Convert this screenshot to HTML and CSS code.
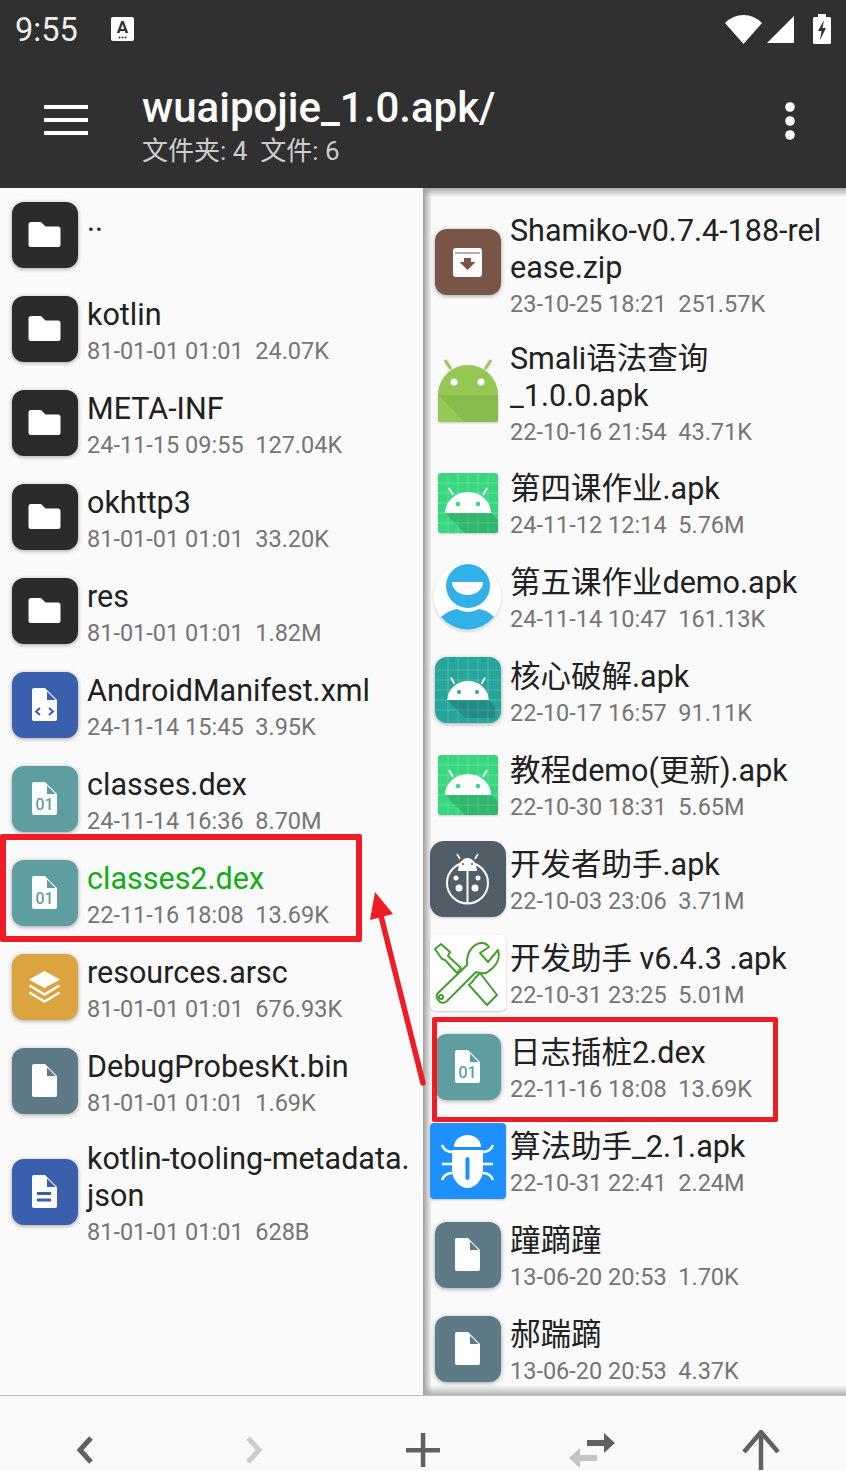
FILE: index.html
```html
<!DOCTYPE html>
<html lang="zh-CN">
<head>
  <meta charset="UTF-8">
  <meta name="viewport" content="width=device-width, initial-scale=1.0">
  <title>wuaipojie_1.0.apk</title>
  <link rel="stylesheet" href="styles.css">
</head>
<body>

  <!-- icon sprite -->
  <svg class="sprite" xmlns="http://www.w3.org/2000/svg">
    <symbol id="folder" viewBox="0 0 66 66">
      <rect width="66" height="66" rx="12" fill="#2b2b2b"/>
      <path d="M19 20h10l4.500 4.500h12.500a2.500 2.500 0 0 1 2.500 2.500v15.500a2.500 2.500 0 0 1-2.500 2.500h-27a2.500 2.500 0 0 1-2.500-2.500v-20a2.500 2.500 0 0 1 2.500-2.500z" fill="#fff"/>
    </symbol>
    <symbol id="doc" viewBox="0 0 66 66">
      <rect width="66" height="66" rx="12" fill="currentColor"/>
      <path d="M22 16h11l12 12v19a2 2 0 0 1-2 2h-21a2 2 0 0 1-2-2v-29a2 2 0 0 1 2-2z" fill="#fff"/>
      <path d="M35 19.500v8.500h8.500z" fill="currentColor"/>
    </symbol>
    <symbol id="layers" viewBox="0 0 66 66">
      <rect width="66" height="66" rx="12" fill="currentColor"/>
      <path d="M32.500 17l15.500 8.500-15.500 8.500-15.500-8.500z" fill="#fff"/>
      <path d="M17.500 31.500l15 9 15-9M17.500 38.500l15 9 15-9" fill="none" stroke="#fff" stroke-width="2.500"/>
    </symbol>
    <symbol id="zip" viewBox="0 0 66 66">
      <rect width="66" height="66" rx="12" fill="currentColor"/>
      <rect x="18" y="19" width="29" height="29" rx="3" fill="#fff"/>
      <path d="M20 24h25" stroke="currentColor"/>
      <path d="M29 29h7v4h4.500l-8 8-8-8h4.500z" fill="currentColor"/>
    </symbol>
    <symbol id="droid" viewBox="0 0 66 66">
      <path d="M10 44h46l7 7v13h-33z" fill="#000" fill-opacity=".14"/>
      <path d="M10 44a23 21 0 0 1 46 0z" fill="#fff"/>
      <path d="M18 26l-4-7M48 26l4-7" stroke="#fff" stroke-width="1.800"/>
      <circle cx="23" cy="35" r="2.200" fill="currentColor"/>
      <circle cx="43" cy="35" r="2.200" fill="currentColor"/>
    </symbol>
  </svg>

  <header class="app-header">
    <div class="status-bar">
      <div class="status-left">
        <span class="clock">9:55</span>
        <svg class="kbd-icon" viewBox="0 0 23 24">
          <rect width="23" height="24" rx="2" fill="#fff"/>
          <text x="11.500" y="16" text-anchor="middle" class="kbd-letter">A</text>
          <circle cx="8.500" cy="20.500" r="1" fill="#303030"/>
          <circle cx="11.500" cy="20.500" r="1" fill="#303030"/>
          <circle cx="14.500" cy="20.500" r="1" fill="#303030"/>
        </svg>
      </div>
      <div class="status-right">
        <svg class="wifi" viewBox="0 0 37 29"><path d="M18.500 29L0 8Q8 0 18.500 0T37 8z" fill="#fff"/></svg>
        <svg class="signal" viewBox="0 0 27 27"><path d="M27 0v27h-27z" fill="#fff"/></svg>
        <svg class="battery" viewBox="0 0 18 30">
          <path d="M5 0h8v3h3.500a1.500 1.500 0 0 1 1.500 1.500v24a1.500 1.500 0 0 1-1.500 1.500h-15a1.500 1.500 0 0 1-1.500-1.500v-24a1.500 1.500 0 0 1 1.500-1.500h3.500z" fill="#fff"/>
          <path d="M11 6l-6 11h3.500l-1.500 9 6-12h-3.500z" fill="#303030"/>
        </svg>
      </div>
    </div>
    <div class="toolbar">
      <svg class="menu-icon" viewBox="0 0 44 30"><path d="M0 0h44v4h-44zM0 13h44v4h-44zM0 26h44v4h-44z" fill="#fff"/></svg>
      <div class="toolbar-text">
        <div class="path-title">wuaipojie_1.0.apk/</div>
        <div class="path-sub">文件夹: 4&nbsp; 文件: 6</div>
      </div>
      <svg class="more-icon" viewBox="0 0 10 38">
        <circle cx="5" cy="5" r="4.800" fill="#fff"/>
        <circle cx="5" cy="19" r="4.800" fill="#fff"/>
        <circle cx="5" cy="33" r="4.800" fill="#fff"/>
      </svg>
    </div>
  </header>

  <main class="panes">
    <ul class="pane pane-left">
      <li class="row">
        <svg class="icon"><use href="#folder"/></svg>
        <div class="info"><div class="name">..</div><div class="meta">&nbsp;</div></div>
      </li>
      <li class="row">
        <svg class="icon"><use href="#folder"/></svg>
        <div class="info"><div class="name">kotlin</div><div class="meta">81-01-01 01:01&nbsp; 24.07K</div></div>
      </li>
      <li class="row">
        <svg class="icon"><use href="#folder"/></svg>
        <div class="info"><div class="name">META-INF</div><div class="meta">24-11-15 09:55&nbsp; 127.04K</div></div>
      </li>
      <li class="row">
        <svg class="icon"><use href="#folder"/></svg>
        <div class="info"><div class="name">okhttp3</div><div class="meta">81-01-01 01:01&nbsp; 33.20K</div></div>
      </li>
      <li class="row">
        <svg class="icon"><use href="#folder"/></svg>
        <div class="info"><div class="name">res</div><div class="meta">81-01-01 01:01&nbsp; 1.82M</div></div>
      </li>
      <li class="row">
        <svg class="icon c-blue" viewBox="0 0 66 66">
          <use href="#doc"/>
          <path d="M28 36l-4 3.500 4 3.500M37 36l4 3.500-4 3.500" fill="none" stroke="#3a5fad" stroke-width="2"/>
        </svg>
        <div class="info"><div class="name">AndroidManifest.xml</div><div class="meta">24-11-14 15:45&nbsp; 3.95K</div></div>
      </li>
      <li class="row">
        <svg class="icon c-teal" viewBox="0 0 66 66">
          <use href="#doc"/>
          <text x="32.500" y="44" text-anchor="middle" class="bin-text">01</text>
        </svg>
        <div class="info"><div class="name">classes.dex</div><div class="meta">24-11-14 16:36&nbsp; 8.70M</div></div>
      </li>
      <li class="row">
        <svg class="icon c-teal" viewBox="0 0 66 66">
          <use href="#doc"/>
          <text x="32.500" y="44" text-anchor="middle" class="bin-text">01</text>
        </svg>
        <div class="info"><div class="name name-open">classes2.dex</div><div class="meta">22-11-16 18:08&nbsp; 13.69K</div></div>
      </li>
      <li class="row">
        <svg class="icon c-amber"><use href="#layers"/></svg>
        <div class="info"><div class="name">resources.arsc</div><div class="meta">81-01-01 01:01&nbsp; 676.93K</div></div>
      </li>
      <li class="row">
        <svg class="icon c-slate"><use href="#doc"/></svg>
        <div class="info"><div class="name">DebugProbesKt.bin</div><div class="meta">81-01-01 01:01&nbsp; 1.69K</div></div>
      </li>
      <li class="row row-tall">
        <svg class="icon c-blue" viewBox="0 0 66 66">
          <use href="#doc"/>
          <path d="M25 33h14v3h-14zM25 39.500h14v3h-14z" fill="#3a5fad"/>
        </svg>
        <div class="info"><div class="name">kotlin-tooling-metadata.<br>json</div><div class="meta">81-01-01 01:01&nbsp; 628B</div></div>
      </li>
    </ul>

    <ul class="pane pane-right">
      <li class="row row-tall">
        <svg class="icon icon-up c-brown"><use href="#zip"/></svg>
        <div class="info"><div class="name">Shamiko-v0.7.4-188-rel<br>ease.zip</div><div class="meta">23-10-25 18:21&nbsp; 251.57K</div></div>
      </li>
      <li class="row row-tall">
        <svg class="icon flat" viewBox="0 0 66 66">
          <path d="M10 2l6 9M56 2l-6 9" stroke="#95c755" stroke-width="2.500"/>
          <path d="M3 37a30 30 0 0 1 60 0v25a2 2 0 0 1-2 2h-56a2 2 0 0 1-2-2z" fill="#95c755"/>
          <path d="M3 37h60v27h-33z" fill="#7fae48" fill-opacity=".55"/>
          <circle cx="19" cy="24" r="3.500" fill="#fff"/>
          <circle cx="46" cy="24" r="3.500" fill="#fff"/>
        </svg>
        <div class="info"><div class="name">Smali语法查询<br>_1.0.0.apk</div><div class="meta">22-10-16 21:54&nbsp; 43.71K</div></div>
      </li>
      <li class="row">
        <svg class="icon flat c-green" viewBox="0 0 66 66">
          <rect x="3" y="4" width="60" height="60" rx="3" fill="#37d67f"/>
          <path d="M13 4v60M23 4v60M33 4v60M43 4v60M53 4v60M3 14h60M3 24h60M3 34h60M3 44h60M3 54h60" stroke="#fff" stroke-opacity=".22"/>
          <use href="#droid"/>
        </svg>
        <div class="info"><div class="name">第四课作业.apk</div><div class="meta">24-11-12 12:14&nbsp; 5.76M</div></div>
      </li>
      <li class="row">
        <svg class="icon icon-round flat" viewBox="0 0 69 69">
          <circle cx="34.500" cy="34.500" r="34" fill="#fff"/>
          <circle cx="35" cy="24" r="22" fill="#33b0e8"/>
          <path d="M19 20h31a15.500 13 0 0 1-31 0z" fill="#fff"/>
          <path d="M8 55Q16 48 24 47Q35 53 46 47Q54 48 61 55A34 34 0 0 1 8 55z" fill="#33b0e8"/>
        </svg>
        <div class="info"><div class="name">第五课作业demo.apk</div><div class="meta">24-11-14 10:47&nbsp; 161.13K</div></div>
      </li>
      <li class="row">
        <svg class="icon c-darkteal" viewBox="0 0 66 66">
          <rect width="66" height="66" rx="12" fill="#26a69a"/>
          <path d="M13 0v66M23 0v66M33 0v66M43 0v66M53 0v66M0 13h66M0 23h66M0 33h66M0 43h66M0 53h66" stroke="#fff" stroke-opacity=".2"/>
          <use href="#droid" transform="translate(3.300 3.400) scale(.9)"/>
        </svg>
        <div class="info"><div class="name">核心破解.apk</div><div class="meta">22-10-17 16:57&nbsp; 91.11K</div></div>
      </li>
      <li class="row">
        <svg class="icon flat c-green" viewBox="0 0 66 66">
          <rect x="3" y="4" width="60" height="60" rx="3" fill="#37d67f"/>
          <path d="M13 4v60M23 4v60M33 4v60M43 4v60M53 4v60M3 14h60M3 24h60M3 34h60M3 44h60M3 54h60" stroke="#fff" stroke-opacity=".22"/>
          <use href="#droid"/>
        </svg>
        <div class="info"><div class="name">教程demo(更新).apk</div><div class="meta">22-10-30 18:31&nbsp; 5.65M</div></div>
      </li>
      <li class="row">
        <svg class="icon icon-lg icon-down flat" viewBox="0 0 76 76">
          <rect width="76" height="76" rx="14" fill="#515d67"/>
          <circle cx="37.500" cy="42" r="20.500" fill="none" stroke="#fff" stroke-width="2"/>
          <path d="M28 30a9.500 13 0 0 1 19 0z" fill="#fff"/>
          <path d="M30 18l-3-5M45 18l3-5" stroke="#fff" stroke-width="1.500"/>
          <path d="M37.500 30v32" stroke="#fff" stroke-width="2"/>
          <circle cx="26" cy="37" r="2.500" fill="#fff"/>
          <circle cx="48" cy="37" r="2.500" fill="#fff"/>
          <circle cx="29" cy="47" r="3.500" fill="#fff"/>
          <circle cx="45" cy="47" r="3.500" fill="#fff"/>
          <circle cx="33" cy="23" r="1" fill="#515d67"/>
          <circle cx="42" cy="23" r="1" fill="#515d67"/>
        </svg>
        <div class="info"><div class="name">开发者助手.apk</div><div class="meta">22-10-03 23:06&nbsp; 3.71M</div></div>
      </li>
      <li class="row">
        <svg class="icon icon-lg icon-down flat" viewBox="0 0 76 76">
          <rect width="76" height="76" rx="6" fill="#fff"/>
          <g fill="none" stroke="#43a02f" stroke-width="2" stroke-linejoin="round">
            <path d="M5 14l6-5 9 8-2 4 13 12-4 5-12-13-3-1z"/>
            <path d="M45 43l5-5 17 22-10 10-18-20 4-4z"/>
            <path d="M37 25C38 15 45 8 52 8c3 0 5 1 7 4l-9 6 8 9 10-12c2 6 1 15-12 23-4 1-7 0-10-1L17 66c-3 3-7 2-9-1-2-3-2-5 0-7l29-28z"/>
            <circle cx="11" cy="62" r="2"/>
          </g>
        </svg>
        <div class="info"><div class="name">开发助手 v6.4.3 .apk</div><div class="meta">22-10-31 23:25&nbsp; 5.01M</div></div>
      </li>
      <li class="row">
        <svg class="icon icon-down c-teal" viewBox="0 0 66 66">
          <use href="#doc"/>
          <text x="32.500" y="44" text-anchor="middle" class="bin-text">01</text>
        </svg>
        <div class="info"><div class="name">日志插桩2.dex</div><div class="meta">22-11-16 18:08&nbsp; 13.69K</div></div>
      </li>
      <li class="row">
        <svg class="icon icon-lg icon-down flat" viewBox="0 0 76 76">
          <rect width="76" height="76" rx="4" fill="#1e90ff"/>
          <path d="M24 24a13.500 12 0 0 1 27 0z" fill="#fff"/>
          <path d="M22 27h31v20c0 10-8 18-15.500 18S22 57 22 47z" fill="#fff"/>
          <path d="M37.500 36v19" stroke="#1e90ff" stroke-width="4" stroke-linecap="round"/>
          <path d="M12 22c2 5 5 7 10 7M63 22c-2 5-5 7-10 7M12 41h10M63 41h-10M12 57c2-5 5-7 10-7M63 57c-2-5-5-7-10-7" fill="none" stroke="#fff" stroke-width="2.500"/>
        </svg>
        <div class="info"><div class="name">算法助手_2.1.apk</div><div class="meta">22-10-31 22:41&nbsp; 2.24M</div></div>
      </li>
      <li class="row">
        <svg class="icon icon-down c-slate"><use href="#doc"/></svg>
        <div class="info"><div class="name">蹱蹢蹱</div><div class="meta">13-06-20 20:53&nbsp; 1.70K</div></div>
      </li>
      <li class="row">
        <svg class="icon icon-down c-slate"><use href="#doc"/></svg>
        <div class="info"><div class="name">郝踹蹢</div><div class="meta">13-06-20 20:53&nbsp; 4.37K</div></div>
      </li>
    </ul>
  </main>

  <footer class="bottom-bar">
    <div class="bar-btn">
      <svg class="bar-icon" viewBox="0 0 40 40"><path d="M26 8L15 20l11 12" fill="none" stroke="#616161" stroke-width="5"/></svg>
    </div>
    <div class="bar-btn">
      <svg class="bar-icon" viewBox="0 0 40 40"><path d="M14 8l11 12-11 12" fill="none" stroke="#cccccc" stroke-width="5"/></svg>
    </div>
    <div class="bar-btn">
      <svg class="bar-icon" viewBox="0 0 40 40"><path d="M3 18h34v4.500h-34zM17.800 3h4.500v34h-4.500z" fill="#616161"/></svg>
    </div>
    <div class="bar-btn">
      <svg class="bar-icon bar-icon-wide" viewBox="0 0 48 40">
        <path d="M19 10h17v-7l11 10-11 10v-7h-17z" fill="#616161"/>
        <path d="M29 25h-17v-7l-11 10 11 10v-7h17z" fill="#c4c4c4"/>
      </svg>
    </div>
    <div class="bar-btn">
      <svg class="bar-icon" viewBox="0 0 40 40"><path d="M20 42V3M3 22L20 2l17 20" fill="none" stroke="#616161" stroke-width="4.500"/></svg>
    </div>
  </footer>

  <!-- red annotations drawn over the screenshot -->
  <div class="mark mark-left"></div>
  <div class="mark mark-right"></div>
  <svg class="mark-arrow" viewBox="0 0 65 200">
    <path d="M58 193L16 26" stroke="#ee1c25" stroke-width="5.500" stroke-linecap="round"/>
    <path d="M10 2L5 30 28 24z" fill="#ee1c25"/>
  </svg>

</body>
</html>
```

FILE: styles.css
```css
* {
  box-sizing: border-box;
}

html, body {
  margin: 0;
  height: 1471px;
  overflow: hidden;
}

body {
  position: relative;
  display: flex;
  flex-direction: column;
  font-family: Roboto, "Noto Sans CJK SC", sans-serif;
  background-color: #fafafa;
}

.sprite {
  position: absolute;
  width: 0;
  height: 0;
}

/* header */
.app-header {
  height: 188px;
  flex: none;
  background-color: #303030;
  color: #fff;
}

.status-bar {
  height: 58px;
  padding: 0 15px;
  display: flex;
  justify-content: space-between;
  align-items: center;
}

.status-left {
  display: flex;
  align-items: center;
  gap: 33px;
}

.clock {
  font-size: 32.5px;
  padding-top: 2px;
  color: #eeeeee;
}

.kbd-icon {
  width: 23px;
  height: 24px;
}

.kbd-letter {
  font-size: 17px;
  font-weight: 700;
  fill: #303030;
}

.status-right {
  display: flex;
  align-items: center;
  gap: 5px;
  height: 30px;
}

.wifi {
  width: 37px;
  height: 29px;
}

.signal {
  width: 27px;
  height: 27px;
}

.battery {
  width: 18px;
  height: 30px;
  margin-left: 14px;
}

.toolbar {
  height: 130px;
  padding: 0 51px 0 44px;
  display: flex;
  align-items: center;
}

.menu-icon {
  width: 44px;
  height: 30px;
  margin-right: 54px;
  margin-bottom: 6px;
}

.toolbar-text {
  flex: 1;
  padding-top: 8px;
}

.path-title {
  font-size: 42px;
  font-weight: 500;
  line-height: 48px;
}

.path-sub {
  font-size: 26px;
  line-height: 38px;
  color: #cccccc;
}

.more-icon {
  width: 10px;
  height: 38px;
  margin-bottom: 4px;
}

/* file lists */
.panes {
  flex: 1;
  display: flex;
  min-height: 0;
}

.pane {
  list-style-type: none;
  margin: 0;
}

.pane-left {
  width: 423px;
  padding: 0 0 0 12px;
}

.pane-right {
  flex: 1;
  padding: 11px 0 0 12px;
  background:
    linear-gradient(to right, #a0a0a0, rgba(250, 250, 250, 0)) left / 9px 100% no-repeat,
    linear-gradient(to bottom, #a8a8a8, rgba(250, 250, 250, 0)) top / 100% 9px no-repeat,
    linear-gradient(to top, #b4b4b4, rgba(250, 250, 250, 0)) bottom / 100% 10px no-repeat;
}

.row {
  height: 94px;
  display: flex;
  align-items: center;
  gap: 9px;
}

.row-tall {
  height: 128px;
}

.icon {
  width: 66px;
  height: 66px;
  flex: none;
  filter: drop-shadow(0 1px 2px rgba(0, 0, 0, 0.35));
}

.icon.flat {
  filter: drop-shadow(0 1px 1px rgba(0, 0, 0, 0.2));
}

.icon-lg {
  width: 76px;
  height: 76px;
  margin: 0 -5px;
}

.icon-round {
  width: 69px;
  height: 69px;
  margin: 0 -1px 0 -2px;
}

/* the right list drifts a pixel between rows */
.icon-down {
  margin-top: 2px;
}

.icon-up {
  margin-bottom: 2px;
}

.c-blue { color: #3a5fad; }
.c-teal { color: #5f9ea0; }
.c-amber { color: #dba43f; }
.c-slate { color: #5f7a87; }
.c-brown { color: #795548; }
.c-green { color: #37d67f; }
.c-darkteal { color: #26a69a; }

.bin-text {
  font-size: 16px;
  font-weight: 500;
  fill: #5f9ea0;
}

.info {
  min-width: 0;
  padding-top: 6px;
}

.pane-right .info {
  padding-top: 8px;
}

.name {
  font-size: 30.5px;
  line-height: 37px;
  margin-bottom: 1px;
  color: #212121;
  white-space: nowrap;
}

.name-open {
  color: #0fae17;
}

.meta {
  font-size: 23.5px;
  line-height: 35px;
  color: #757575;
  white-space: nowrap;
}

/* bottom bar */
.bottom-bar {
  height: 76px;
  flex: none;
  border-top: 1px solid #bdbdbd;
  display: flex;
  padding-top: 34px;
  background-color: #fafafa;
}

.bar-btn {
  flex: 1;
  display: flex;
  justify-content: center;
}

.bar-icon {
  width: 40px;
  height: 40px;
}

.bar-icon-wide {
  width: 48px;
}

/* annotations */
.mark {
  position: absolute;
  border: 6px solid #ee1c25;
  border-radius: 2px;
}

.mark-left {
  left: 0;
  top: 834px;
  width: 362px;
  height: 108px;
}

.mark-right {
  left: 432px;
  top: 1017px;
  width: 346px;
  height: 105px;
  border-width: 5px;
}

.mark-arrow {
  position: absolute;
  left: 365px;
  top: 890px;
  width: 65px;
  height: 200px;
}
```
